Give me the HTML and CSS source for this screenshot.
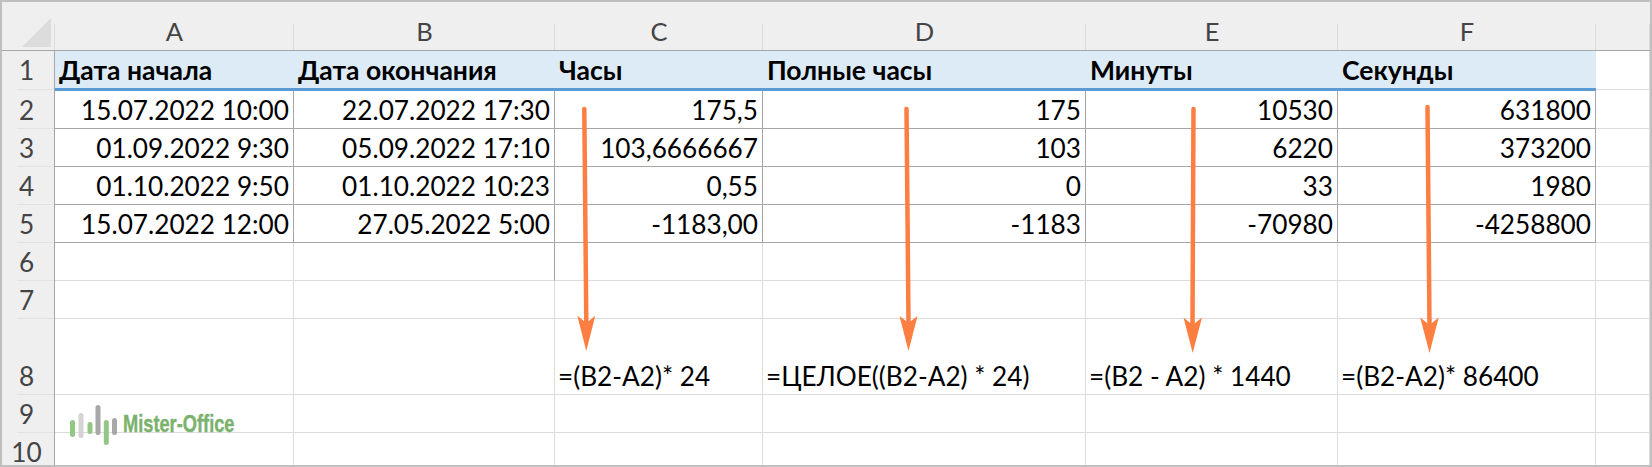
FILE: index.html
```html
<!DOCTYPE html>
<html lang="ru">
<head>
<meta charset="utf-8">
<title>Разница во времени</title>
<link rel="stylesheet" href="styles.css">
</head>
<body>
<div class="page">
  <div class="sheet">
    <div class="grid">
      <div class="corner"><span class="tri"></span></div>
      <div class="ch">A</div><div class="ch">B</div><div class="ch">C</div><div class="ch">D</div><div class="ch">E</div><div class="ch">F</div><div class="ch"></div>

      <div class="rh top">1</div>
      <div class="c th">Дата начала</div><div class="c th">Дата окончания</div><div class="c th">Часы</div><div class="c th">Полные часы</div><div class="c th">Минуты</div><div class="c th">Секунды</div><div class="c"></div>

      <div class="rh">2</div>
      <div class="c d n first">15.07.2022 10:00</div><div class="c d n first">22.07.2022 17:30</div><div class="c d n first">175,5</div><div class="c d n first">175</div><div class="c d n first">10530</div><div class="c d n first">631800</div><div class="c"></div>

      <div class="rh">3</div>
      <div class="c d n">01.09.2022 9:30</div><div class="c d n">05.09.2022 17:10</div><div class="c d n">103,6666667</div><div class="c d n">103</div><div class="c d n">6220</div><div class="c d n">373200</div><div class="c"></div>

      <div class="rh">4</div>
      <div class="c d n">01.10.2022 9:50</div><div class="c d n">01.10.2022 10:23</div><div class="c d n">0,55</div><div class="c d n">0</div><div class="c d n">33</div><div class="c d n">1980</div><div class="c"></div>

      <div class="rh">5</div>
      <div class="c d n">15.07.2022 12:00</div><div class="c d n">27.05.2022 5:00</div><div class="c d n">-1183,00</div><div class="c d n">-1183</div><div class="c d n">-70980</div><div class="c d n">-4258800</div><div class="c"></div>

      <div class="rh">6</div>
      <div class="c"></div><div class="c stray"></div><div class="c"></div><div class="c"></div><div class="c"></div><div class="c"></div><div class="c"></div>

      <div class="rh">7</div>
      <div class="c"></div><div class="c"></div><div class="c"></div><div class="c"></div><div class="c"></div><div class="c"></div><div class="c"></div>

      <div class="rh">8</div>
      <div class="c"></div><div class="c"></div><div class="c">=(B2-A2)* 24</div><div class="c">=ЦЕЛОЕ((B2-A2) * 24)</div><div class="c">=(B2 - A2) * 1440</div><div class="c">=(B2-A2)* 86400</div><div class="c"></div>

      <div class="rh">9</div>
      <div class="c"></div><div class="c"></div><div class="c"></div><div class="c"></div><div class="c"></div><div class="c"></div><div class="c"></div>

      <div class="rh">10</div>
      <div class="c"></div><div class="c"></div><div class="c"></div><div class="c"></div><div class="c"></div><div class="c"></div><div class="c"></div>
    </div>
  </div>

  <svg class="arrows" width="1652" height="467" viewBox="0 0 1652 467" aria-hidden="true">
    <g class="arrow">
      <path class="shaft" d="M584.3 109L586.3 322"/>
      <path class="head" d="M577.3 315.7L586.3 323L595.3 315.7L586.3 351Z"/>
    </g>
    <g class="arrow">
      <path class="shaft" d="M906.5 109L908.5 322"/>
      <path class="head" d="M899.5 316L908.5 323L917.5 316L908.5 351Z"/>
    </g>
    <g class="arrow">
      <path class="shaft" d="M1193.5 109L1192.5 324"/>
      <path class="head" d="M1183.5 317.5L1192.7 325L1202 317.5L1192.7 353Z"/>
    </g>
    <g class="arrow">
      <path class="shaft" d="M1427.5 107L1429.5 324"/>
      <path class="head" d="M1420.2 317.5L1429.5 325L1438.7 317.5L1429.5 353Z"/>
    </g>
  </svg>

  <div class="logo">
    <svg class="bars" width="52" height="34" viewBox="0 0 52 34" aria-hidden="true">
      <rect class="g" x="0" y="9" width="5" height="17" rx="2.5"/>
      <rect class="l" x="8.5" y="2" width="5" height="25" rx="2.5"/>
      <rect class="g" x="17.5" y="11" width="5" height="12" rx="2.5"/>
      <rect class="k" x="25.5" y="-6" width="5" height="30" rx="2.5"/>
      <rect class="g" x="33.8" y="9" width="5" height="25" rx="2.5"/>
      <rect class="k" x="42" y="7" width="5" height="17" rx="2.5"/>
    </svg>
    <span class="logotext">Mister-Office</span>
  </div>
</div>
</body>
</html>
```

FILE: styles.css
```css
* { box-sizing: border-box; }
html, body { margin: 0; padding: 0; background: #fff; }
body { width: 1652px; height: 467px; overflow: hidden; font-family: "Lato", "Open Sans", "Noto Sans", sans-serif; }
.page { position: relative; width: 1652px; height: 467px; }
.sheet { width: 1652px; height: 467px; border: 2px solid #bfbfbf; overflow: hidden; background: #fff; }
.grid {
  display: grid;
  grid-template-columns: 53px 239px 261px 208px 323px 252px 258px 54px;
  grid-template-rows: 49px 39px 39px 38px 38px 38px 38px 38px 76px 38px 38px;
  font-size: 26.2px;
  line-height: 32px;
  color: #000;
}
.corner { position: relative; background: #efefef; border-bottom: 1px solid #a6a6a6; }
.corner::after { content: ""; position: absolute; right: 0; top: 22px; bottom: 0; width: 1px; background: #dcdcdc; }
.tri {
  position: absolute; left: 20px; top: 16px; width: 29px; height: 29px;
  background: #dcdcdc;
  clip-path: polygon(100% 0, 100% 100%, 0 100%);
}
.ch {
  position: relative; background: #efefef; border-bottom: 1px solid #a6a6a6; color: #444;
  display: flex; align-items: flex-end; justify-content: center; padding-bottom: 3px;
  font-size: 25.5px;
}
.ch::after { content: ""; position: absolute; right: 0; top: 22px; bottom: 0; width: 1px; background: #dcdcdc; }
.rh {
  position: relative; background: #efefef; border-right: 1px solid #a6a6a6; color: #444;
  display: flex; align-items: flex-end; justify-content: center; padding: 0 3px 3px 0;
}
.rh.top { padding-bottom: 4px; }
.rh::after { content: ""; position: absolute; left: 15px; right: 0; bottom: 0; height: 1px; background: #e2e2e2; }
.c {
  display: flex; align-items: flex-end; padding: 0 4px 2px 3px; white-space: nowrap;
  border-right: 1px solid #dcdcdc; border-bottom: 1px solid #dcdcdc;
}
.th { font-weight: 700; font-size: 26.5px; padding-left: 4px; background: #ddebf7; border-right: 0; border-bottom: 2px solid #5b9bd5; padding-bottom: 2px; }
.d { border-right-color: #a6a6a6; border-bottom-color: #a6a6a6; }
.first { border-top: 1px solid #5b9bd5; }
.n { justify-content: flex-end; }
.stray { border-right-color: #a6a6a6; }
.arrows { position: absolute; left: 0; top: 0; }
.shaft { fill: none; stroke: #fd7e41; stroke-width: 4.5; stroke-linecap: round; }
.head { fill: #fd7e41; }
.logo { position: absolute; left: 70px; top: 411px; display: flex; align-items: flex-start; gap: 1px; }
.bars { display: block; overflow: visible; }
.bars .g { fill: #93c784; }
.bars .l { fill: #d4d4d4; }
.bars .k { fill: #a8a8a8; }
.logotext {
  font-family: "Liberation Sans", sans-serif; font-weight: 700;
  font-size: 24px; line-height: 26px; color: #7ab26d;
  -webkit-text-stroke: 0.4px #7ab26d;
  transform: scaleX(.76); transform-origin: left center;
}
```
